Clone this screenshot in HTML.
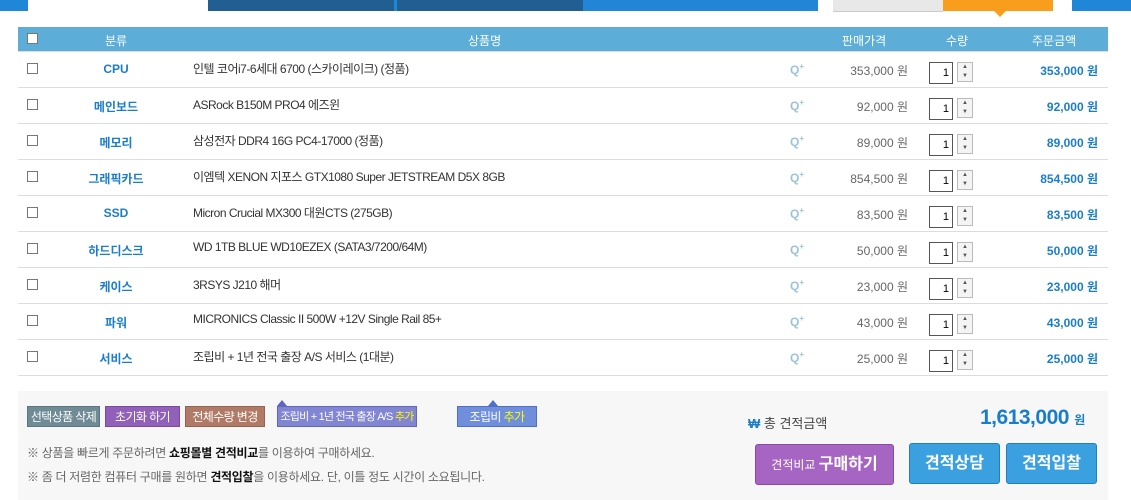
<!DOCTYPE html>
<html><head><meta charset="utf-8"><style>
body{margin:0;width:1131px;height:500px;background:#fff;font-family:"Liberation Sans","Noto Sans CJK KR",sans-serif;position:relative;overflow:hidden}
.a{position:absolute}
.hd{left:18px;top:27px;width:1090px;height:24px;background:#5caed8;color:#fff;font-size:12px}
.hd span{position:absolute;top:5px}
.cb{width:11px;height:11px;border:1px solid #777;background:#fff;box-sizing:border-box}
.row{left:18px;width:1090px;height:35px;border-bottom:1px solid #ddd;font-size:12px}
.row span{position:absolute;top:10px}
.cat{color:#1a7dc8;font-weight:bold;width:100px;text-align:center;left:48px}
.nm{left:175px;color:#333;letter-spacing:-0.5px;margin-top:-2px}
.q{left:772px;color:#9bc3dc;font-weight:bold}
.pr{right:200px;color:#666}
.tt{right:10px;color:#1a7dc8;font-weight:bold}
.inp{position:absolute;left:911px;top:10px;width:24px;height:22px;border:1px solid #555;box-sizing:border-box;font-size:11px;text-align:right;padding-right:3px;line-height:20px;background:#fff}
.sp{position:absolute;left:939px;top:10px;width:16px;height:20px;border:1px solid #bbb;box-sizing:border-box;font-size:6px;color:#555;text-align:center;line-height:9px;background:#f4f4f4}
.btn{position:absolute;top:406px;height:21px;color:#fff;font-size:12px;text-align:center;line-height:20px;box-sizing:border-box;white-space:nowrap;letter-spacing:-0.6px;overflow:hidden}
</style></head><body>
<div class="a" style="left:0;top:0;width:1131px;height:11px;background:#1f86d8"></div>
<div class="a" style="left:28px;top:0;width:180px;height:11px;background:#fff"></div>
<div class="a" style="left:208px;top:0;width:186px;height:11px;background:#215f93"></div>
<div class="a" style="left:397px;top:0;width:186px;height:11px;background:#215f93"></div>
<div class="a" style="left:583px;top:0;width:235px;height:11px;background:#2385d6;border-bottom-right-radius:14px"></div>
<div class="a" style="left:818px;top:0;width:254px;height:11px;background:#fff"></div>
<div class="a" style="left:833px;top:0;width:110px;height:11px;background:#e8e8e8;border-bottom:1px solid #ccc"></div>
<div class="a" style="left:943px;top:0;width:110px;height:11px;background:#f99e1c"></div>
<div class="a" style="left:994px;top:11px;width:0;height:0;border-left:6px solid transparent;border-right:6px solid transparent;border-top:6px solid #f99e1c"></div>
<div class="a" style="left:1072px;top:0;width:59px;height:11px;background:#1f86d8"></div>
<div class="a hd"><div class="a cb" style="left:9px;top:6px"></div><span style="left:87px">분류</span><span style="left:450px">상품명</span><span style="left:824px">판매가격</span><span style="left:928px">수량</span><span style="left:1014px">주문금액</span></div>
<div class="a" style="left:18px;top:51px;width:1090px;height:1px;background:#ddd"></div>
<div id="rows"></div>
<div class="a" style="left:18px;top:391px;width:1090px;height:109px;background:#f7f7f7"></div>
<div class="btn" style="left:27px;width:73px;background:#6f8b95;border:1px solid #5b767f">선택상품 삭제</div>
<div class="btn" style="left:105px;width:75px;background:#9160b8;border:1px solid #7a4aa0">초기화 하기</div>
<div class="btn" style="left:185px;width:80px;background:#b07a66;border:1px solid #946250">전체수량 변경</div>
<div class="btn" style="left:277px;width:140px;background:#8185d2;border:1px solid #6067c0;font-size:11px;letter-spacing:-0.8px">조립비 + 1년 전국 출장 A/S <span style="color:#ff0">추가</span></div>
<div class="btn" style="left:457px;width:80px;background:#6f8edc;border:1px solid #5070c8">조립비 <span style="color:#ff0">추가</span></div>
<div class="a" style="left:277px;top:400px;border-left:5px solid transparent;border-right:5px solid transparent;border-bottom:6px solid #6067c0"></div>
<div class="a" style="left:488px;top:400px;border-left:5px solid transparent;border-right:5px solid transparent;border-bottom:6px solid #5070c8"></div>
<div class="a" style="left:27px;top:444px;font-size:12px;color:#666;letter-spacing:-0.3px">※ 상품을 빠르게 주문하려면 <b style="color:#111">쇼핑몰별 견적비교</b>를 이용하여 구매하세요.</div>
<div class="a" style="left:27px;top:468px;font-size:12px;color:#666;letter-spacing:-0.3px">※ 좀 더 저렴한 컴퓨터 구매를 원하면 <b style="color:#111">견적입찰</b>을 이용하세요. 단, 이틀 정도 시간이 소요됩니다.</div>
<div class="a" style="left:748px;top:413px;font-size:13px;color:#444"><b style="color:#1a7dc8">₩</b> 총 견적금액</div>
<div class="a" style="left:980px;top:406px;font-size:21px;font-weight:bold;color:#1a7dc8;letter-spacing:-0.5px">1,613,000 <span style="font-size:12px">원</span></div>
<div class="a" style="left:755px;top:444px;width:139px;height:41px;background:#a665c2;border:1px solid #8a49a8;border-radius:3px;box-sizing:border-box;color:#fff;text-align:center;line-height:40px;font-size:12px">견적비교 <b style="font-size:16px">구매하기</b></div>
<div class="a" style="left:909px;top:443px;width:91px;height:41px;background:#3ba0e0;border:1px solid #1f7fc4;border-radius:3px;box-sizing:border-box;color:#fff;text-align:center;line-height:40px;font-size:16px;font-weight:bold">견적상담</div>
<div class="a" style="left:1006px;top:443px;width:91px;height:41px;background:#3ba0e0;border:1px solid #1f7fc4;border-radius:3px;box-sizing:border-box;color:#fff;text-align:center;line-height:40px;font-size:16px;font-weight:bold">견적입찰</div>
<script>
var d=[["CPU","인텔 코어i7-6세대 6700 (스카이레이크) (정품)","353,000"],["메인보드","ASRock B150M PRO4 에즈윈","92,000"],["메모리","삼성전자 DDR4 16G PC4-17000 (정품)","89,000"],["그래픽카드","이엠텍 XENON 지포스 GTX1080 Super JETSTREAM D5X 8GB","854,500"],["SSD","Micron Crucial MX300 대원CTS (275GB)","83,500"],["하드디스크","WD 1TB BLUE WD10EZEX (SATA3/7200/64M)","50,000"],["케이스","3RSYS J210 해머","23,000"],["파워","MICRONICS Classic II 500W +12V Single Rail 85+","43,000"],["서비스","조립비 + 1년 전국 출장 A/S 서비스 (1대분)","25,000"]];
var h="";d.forEach(function(r,i){h+='<div class="a row" style="top:'+(52+i*36)+'px"><div class="a cb" style="left:9px;top:11px"></div><span class="cat">'+r[0]+'</span><span class="nm">'+r[1]+'</span><span class="q">Q<sup style="font-size:8px">+</sup></span><span class="pr">'+r[2]+' 원</span><div class="inp">1</div><div class="sp">▲<br>▼</div><span class="tt">'+r[2]+' 원</span></div>'});
document.getElementById("rows").innerHTML=h;
</script>
</body></html>
